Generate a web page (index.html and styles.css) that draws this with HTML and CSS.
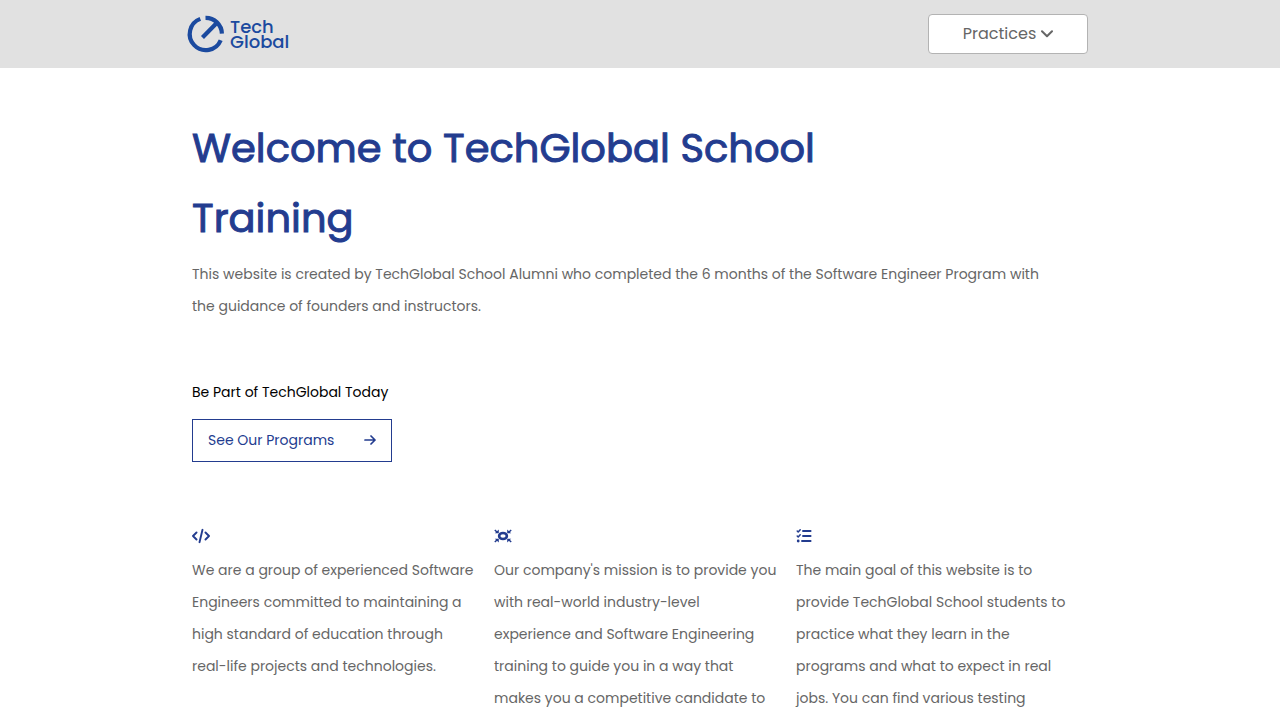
FILE: index.html
```html
<!DOCTYPE html>
<html lang="en">
<head>
<meta charset="utf-8">
<meta name="viewport" content="width=device-width, initial-scale=1">
<title>TechGlobal Training</title>
<link rel="stylesheet" href="styles.css">
</head>
<body>
<header class="header">
  <div class="container header-inner">
    <a class="logo" href="#">
      <svg class="logo-mark" viewBox="0 0 36 38" aria-hidden="true"><path d="M12.300 3.900A16.100 16.100 0 1 0 32.700 25.200M17.500 2.900A16.100 16.100 0 0 1 33.900 18.600M14.500 22.500L28.700 8" fill="none" stroke="currentColor" stroke-width="4.200"/></svg>
      <span class="logo-text">Tech<br>Global</span>
    </a>
    <button class="practices" type="button">Practices
      <svg class="chevron" viewBox="0 0 12 8" aria-hidden="true"><path d="M1 1.200L6 6.200L11 1.200" fill="none" stroke="currentColor" stroke-width="2" stroke-linecap="round" stroke-linejoin="round"/></svg>
    </button>
  </div>
</header>
<main class="container">
  <h1 class="title">Welcome to TechGlobal School Training</h1>
  <p class="text intro">This website is created by TechGlobal School Alumni who completed the 6 months of the Software Engineer Program with the guidance of founders and instructors.</p>
  <p class="lead">Be Part of TechGlobal Today</p>
  <a class="programs" href="#">See Our Programs
    <svg class="arrow" viewBox="0 0 12 10" aria-hidden="true"><path d="M1 5H11M7 1L11 5L7 9" fill="none" stroke="currentColor" stroke-width="1.700" stroke-linecap="round" stroke-linejoin="round"/></svg>
  </a>
  <div class="cards">
    <section class="card">
      <svg class="icon" viewBox="0 0 20 16" aria-hidden="true"><path d="M4.500 4.500L1 8L4.500 11.500M13.500 4.500L17 8L13.500 11.500M10.500 1.800L7.500 14.200" fill="none" stroke="currentColor" stroke-width="1.900" stroke-linecap="round" stroke-linejoin="round"/></svg>
      <p class="text">We are a group of experienced Software Engineers committed to maintaining a high standard of education through real-life projects and technologies.</p>
    </section>
    <section class="card">
      <svg class="icon" viewBox="0 0 20 16" aria-hidden="true"><ellipse cx="9" cy="8" rx="3.900" ry="3" fill="none" stroke="currentColor" stroke-width="2.600"/><path d="M.8 2L3.500 4.500M17.200 2L14.500 4.500M.8 14L3.500 11.500M17.200 14L14.500 11.500" stroke="currentColor" stroke-width="1.500"/><path d="M4.800 1.500V5.300H.8ZM13.200 1.500V5.300H17.200ZM4.800 14.500V10.700H.8ZM13.200 14.500V10.700H17.200Z" fill="currentColor"/></svg>
      <p class="text">Our company's mission is to provide you with real-world industry-level experience and Software Engineering training to guide you in a way that makes you a competitive candidate to</p>
    </section>
    <section class="card">
      <svg class="icon" viewBox="0 0 20 16" aria-hidden="true"><path d="M7 3H14.600M7 8H14.600M6 13H14.600" stroke="currentColor" stroke-width="1.900" stroke-linecap="round"/><path d="M1.200 3L2.200 4L4.200 1.800M1.200 8L2.200 9L4.200 6.800" fill="none" stroke="currentColor" stroke-width="1.500" stroke-linecap="round" stroke-linejoin="round"/><circle cx="2.200" cy="13" r="1.400" fill="currentColor"/></svg>
      <p class="text">The main goal of this website is to provide TechGlobal School students to practice what they learn in the programs and what to expect in real jobs. You can find various testing</p>
    </section>
  </div>
</main>
</body>
</html>
```

FILE: styles.css
```css
* { box-sizing: border-box; }
body {
  margin: 0;
  background: #fff;
  color: #666;
  font-family: Poppins, Inter, "Open Sans", sans-serif;
  font-size: 14px;
  font-weight: 400;
  line-height: 32px;
}
.container { width: 70%; margin: 0 auto; }
.header { background: #e1e1e1; }
.header-inner {
  display: flex;
  align-items: center;
  justify-content: space-between;
  padding: 14px 0;
}
.logo {
  display: flex;
  align-items: center;
  gap: 6px;
  margin-left: -4px;
  color: #1b4a9f;
  text-decoration: none;
}
.logo-mark { width: 36px; height: 38px; overflow: visible; }
.logo-text {
  font-size: 18px;
  font-weight: 500;
  line-height: 15px;
}
.practices {
  display: flex;
  align-items: center;
  justify-content: center;
  gap: 5px;
  width: 160px;
  height: 40px;
  border: 1px solid #b3b3b3;
  border-radius: 4px;
  background: #fff;
  color: #666;
  font: inherit;
  font-size: 16px;
}
.chevron { width: 12px; height: 8px; }
.title {
  margin: 45px 0 5px;
  max-width: 720px;
  color: #233c8f;
  font-size: 40px;
  font-weight: 400;
  line-height: 70px;
  -webkit-text-stroke: 1px currentColor;
}
.text { margin: 0; }
.intro { padding-right: 24px; }
.lead { margin: 54px 0 11px; color: #000; }
.programs {
  display: flex;
  align-items: center;
  justify-content: space-between;
  width: 200px;
  height: 43px;
  padding: 0 15px 2px;
  border: 1px solid #233c8f;
  color: #233c8f;
  text-decoration: none;
}
.arrow { width: 12px; height: 10px; }
.cards {
  display: grid;
  grid-template-columns: repeat(3, 1fr);
  gap: 10px;
  margin-top: 66px;
}
.card { padding-right: 8px; }
.icon {
  display: block;
  width: 20px;
  height: 16px;
  margin-bottom: 10px;
  color: #233c8f;
}
```
